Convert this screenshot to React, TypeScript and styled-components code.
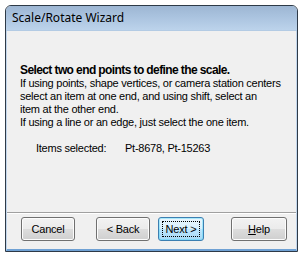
import React from "react";
import styled, { createGlobalStyle } from "styled-components";

const GlobalStyle = createGlobalStyle`
  html, body {
    margin: 0;
    padding: 0;
    background: #ffffff;
  }
  * {
    box-sizing: border-box;
  }
`;

const Window = styled.div`
  margin: 5px 0 0 5px;
  width: 293px;
  height: 247px;
  display: flex;
  flex-direction: column;
  border: 1px solid #2e3a47;
  border-radius: 6px 6px 0 0;
  overflow: hidden;
  background: #f0f0f0;
`;

const TitleBar = styled.div`
  height: 25px;
  flex: none;
  display: flex;
  align-items: center;
  padding: 0 0 1px 6px;
  background: linear-gradient(#9db6d3 0%, #aac3df 45%, #bcd3eb 100%);
  border-bottom: 1px solid #b3cbe4;
  font-family: "Noto Sans", "Open Sans", sans-serif;
  font-size: 12px;
  color: #000000;
`;

const Body = styled.div`
  flex: 1;
  display: flex;
  flex-direction: column;
  border-left: 1px solid #c2d6ec;
  border-right: 1px solid #c2d6ec;
  border-bottom: 2px solid #6fa1d4;
  font-family: "Liberation Sans", Arial, sans-serif;
  font-size: 11px;
  line-height: 13px;
  letter-spacing: -0.25px;
  color: #000000;
`;

const Content = styled.div`
  flex: 1;
  padding: 33px 0 0 13px;
`;

const Heading = styled.div`
  font-weight: bold;
  font-size: 12px;
  line-height: 13px;
  letter-spacing: -0.6px;
`;

const Message = styled.div`
  margin-top: 0;
`;

const SelectedRow = styled.div`
  display: grid;
  grid-template-columns: 89px auto;
  margin-top: 13px;
  padding-left: 16px;
`;

const Footer = styled.div`
  flex: none;
  display: flex;
  align-items: center;
  height: 37px;
  padding: 0 0 5px 14px;
  border-top: 1px solid #a0a0a0;
  box-shadow: inset 0 1px 0 #ffffff;
`;

const Button = styled.button<{ $width: number; $gap: number; $default?: boolean }>`
  position: relative;
  width: ${(p) => p.$width}px;
  height: 24px;
  margin-left: ${(p) => p.$gap}px;
  padding: 0;
  border: 1px solid ${(p) => (p.$default ? "#3c7fb1" : "#707070")};
  border-radius: 3px;
  background: ${(p) =>
    p.$default
      ? "linear-gradient(#eaf6fd 0%, #d9f0fc 50%, #bee6fd 50%, #a7d9f5 100%)"
      : "linear-gradient(#f2f2f2 0%, #ebebeb 50%, #dddddd 50%, #cfcfcf 100%)"};
  box-shadow: inset 0 0 0 1px ${(p) => (p.$default ? "#48d8fb66" : "#fcfcfc")};
  font-family: "Liberation Sans", Arial, sans-serif;
  font-size: 11px;
  letter-spacing: -0.2px;
  color: #000000;
  &::after {
    content: "";
    display: ${(p) => (p.$default ? "block" : "none")};
    position: absolute;
    inset: 3px;
    border: 1px dotted #000000;
  }
`;

const Mnemonic = styled.span`
  text-decoration: underline;
`;

export default function App() {
  return (
    <>
      <GlobalStyle />
      <Window>
        <TitleBar>Scale/Rotate Wizard</TitleBar>
        <Body>
          <Content>
            <Heading>Select two end points to define the scale.</Heading>
            <Message>
              If using points, shape vertices, or camera station centers
              <br />
              select an item at one end, and using shift, select an
              <br />
              item at the other end.
              <br />
              If using a line or an edge, just select the one item.
            </Message>
            <SelectedRow>
              <span>Items selected:</span>
              <span>Pt-8678, Pt-15263</span>
            </SelectedRow>
          </Content>
          <Footer>
            <Button $width={54} $gap={0}>Cancel</Button>
            <Button $width={54} $gap={21}>&lt; Back</Button>
            <Button $width={46} $gap={8} $default>Next &gt;</Button>
            <Button $width={56} $gap={27}>
              <Mnemonic>H</Mnemonic>elp
            </Button>
          </Footer>
        </Body>
      </Window>
    </>
  );
}
